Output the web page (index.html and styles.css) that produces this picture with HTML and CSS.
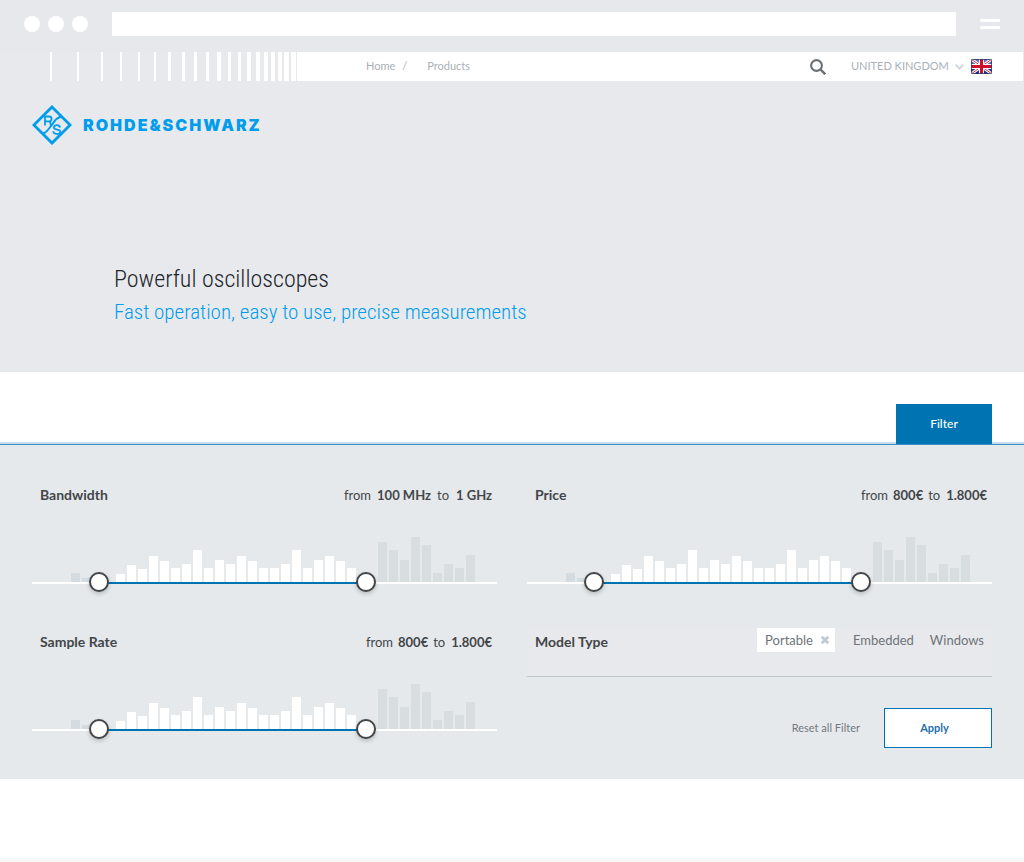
FILE: index.html
```html
<!DOCTYPE html>
<html lang="en">
<head>
<meta charset="utf-8">
<meta name="viewport" content="width=device-width, initial-scale=1">
<title>Powerful oscilloscopes</title>
<link rel="stylesheet" href="styles.css">
</head>
<body>
<div class="browser">
  <span class="dots"><i class="dot"></i><i class="dot"></i><i class="dot"></i></span>
  <input class="address" type="text" aria-label="Address">
  <button class="menu" type="button" aria-label="Menu"><i class="menu-line"></i><i class="menu-line"></i></button>
</div>

<header class="hero">
  <div class="topnav">
    <svg class="stripes" width="247" height="29" viewBox="50 0 247 29" fill="#fff" shape-rendering="crispEdges" aria-hidden="true">
      <path d="M50 0h2v29h-2zM77 0h2v29h-2zM101 0h2v29h-2zM120 0h2v29h-2zM138 0h2v29h-2zM154 0h2v29h-2zM168 0h3v29h-3zM182 0h3v29h-3zM194 0h3v29h-3zM206 0h3v29h-3zM217 0h4v29h-4zM228 0h3v29h-3zM238 0h3v29h-3zM247 0h4v29h-4zM256 0h4v29h-4zM264 0h4v29h-4zM271 0h4v29h-4zM278 0h4v29h-4zM284 0h5v29h-5zM291 0h5v29h-5z"/>
    </svg>
    <div class="topnav-main">
      <nav class="crumbs" aria-label="Breadcrumb">
        <a class="crumb" href="#">Home</a><span class="slash">/</span><a class="crumb" href="#">Products</a>
      </nav>
      <div class="tools">
        <button class="search" type="button" aria-label="Search">
          <svg width="16" height="16" viewBox="0 0 16 16" fill="none" stroke="#6b7074"><circle cx="6.5" cy="6.5" r="5.4" stroke-width="2.1"/><path d="M10.5 10.5l4.8 4.8" stroke-width="2.4"/></svg>
        </button>
        <span class="region">
          <select class="country" aria-label="Country"><option>UNITED KINGDOM</option></select>
          <svg class="chevron" width="9" height="6" viewBox="0 0 9 6" fill="none" stroke="#d3d8dc" stroke-width="2"><path d="M.7.8l3.800 3.800L8.300.8"/></svg>
        </span>
        <svg class="flag" width="21" height="15" viewBox="0 0 21 15" aria-hidden="true">
          <defs>
            <linearGradient id="navy" x2="0" y2="1"><stop offset="0" stop-color="#6d80b8"/><stop offset="1" stop-color="#0d2878"/></linearGradient>
            <clipPath id="flagEdge"><rect width="21" height="15" rx="1"/></clipPath>
          </defs>
          <g clip-path="url(#flagEdge)">
            <rect width="21" height="15" fill="url(#navy)"/>
            <path d="M0 0l21 15M21 0L0 15" stroke="#fff" stroke-width="3"/>
            <path d="M0 0l21 15M21 0L0 15" stroke="#d8304a" stroke-width="1"/>
            <path d="M10.500 0v15M0 7.500h21" stroke="#fff" stroke-width="5"/>
            <path d="M10.500 0v15M0 7.500h21" stroke="#cf102d" stroke-width="3"/>
            <rect x=".5" y=".5" width="20" height="14" rx="1" fill="none" stroke="#26356e" stroke-opacity=".75"/>
          </g>
        </svg>
      </div>
    </div>
  </div>

  <a class="brand" href="#" aria-label="Rohde &amp; Schwarz">
    <svg width="40" height="40" viewBox="0 0 40 40" fill="none" stroke="#009dec" aria-hidden="true">
      <path d="M20 1.900L38.100 20 20 38.100 1.900 20z" stroke-width="2.800"/>
      <path d="M29 11.500C23 13.500 22.500 17 19.800 20S16 26.500 11 29" stroke-width="2"/>
      <path d="M13 20.500V11.500h4.100a2.400 2.400 0 0 1 0 4.900H13M16.800 16.400c2 .3 1.700 1.700 2 4.100" stroke-width="1.800"/>
      <path d="M28 22.600c-.4-3.500-6.300-3.200-6.100 0 .3 2.700 6.300 1.400 6.400 4 .1 3.200-6.700 3.300-7-.4" stroke-width="1.800"/>
    </svg>
    <span class="wordmark">ROHDE&amp;SCHWARZ</span>
  </a>

  <div class="headline">
    <h1 class="title">Powerful oscilloscopes</h1>
    <p class="subtitle">Fast operation, easy to use, precise measurements</p>
  </div>
</header>

<main>
  <div class="tabs"><button class="tab" type="button">Filter</button></div>

  <form class="filters">
    <section class="range" data-range>
      <div class="range-head">
        <h2 class="label">Bandwidth</h2>
        <p class="values wide"><span>from</span><b>100 MHz</b><span>to</span><b class="upper">1 GHz</b></p>
      </div>
    </section>

    <section class="range" data-range>
      <div class="range-head">
        <h2 class="label">Price</h2>
        <p class="values"><span>from</span><b>800€</b><span>to</span><b class="upper">1.800€</b></p>
      </div>
    </section>

    <section class="range" data-range>
      <div class="range-head">
        <h2 class="label">Sample Rate</h2>
        <p class="values"><span>from</span><b>800€</b><span>to</span><b class="upper">1.800€</b></p>
      </div>
    </section>

    <div class="last">
      <section class="model">
        <h2 class="label">Model Type</h2>
        <div class="options">
          <button class="option selected" type="button" aria-pressed="true">Portable
            <svg width="8" height="8" viewBox="0 0 8 8" stroke="#c0c9cf" stroke-width="2.800" aria-hidden="true"><path d="M.8.8l6.400 6.400M7.200.8L.8 7.200"/></svg>
          </button>
          <button class="option" type="button" aria-pressed="false">Embedded</button>
          <button class="option" type="button" aria-pressed="false">Windows</button>
        </div>
      </section>
      <div class="actions">
        <button class="reset" type="reset">Reset all Filter</button>
        <button class="apply" type="submit">Apply</button>
      </div>
    </div>
  </form>
</main>
<footer class="footer"></footer>
<script src="filters.js"></script>
</body>
</html>
```
FILE: styles.css
```css
* { box-sizing: border-box; }

body {
  margin: 0;
  min-height: 100vh;
  display: flex;
  flex-direction: column;
  background: #fff;
  color: #434649;
  font-family: Lato, "Liberation Sans", sans-serif;
  font-size: 13px;
}

h1, h2, p { margin: 0; }
button, input, select { font: inherit; color: inherit; margin: 0; }
button { border: 0; padding: 0; background: none; cursor: pointer; }
a { color: inherit; text-decoration: none; }
svg { display: block; flex: none; }

.browser {
  display: flex;
  align-items: center;
  gap: 24px;
  height: 52px;
  padding: 0 24px 4px;
  background: #e7e8ec;
}
.dots { display: flex; gap: 8px; }
.dot { width: 16px; height: 16px; border-radius: 50%; background: #fff; }
.address { flex: 1; min-width: 0; height: 24px; border: 0; padding: 0 8px; background: #fff; }
.menu { display: flex; flex-direction: column; gap: 4px; }
.menu-line { width: 20px; height: 3px; border-radius: 1px; background: #fff; }

.hero { background: #e8e9ed; padding-bottom: 45px; }
.topnav { display: flex; padding: 0 1px 0 50px; }
.topnav-main {
  flex: 1;
  display: flex;
  justify-content: space-between;
  align-items: center;
  height: 29px;
  padding: 0 31px 0 69px;
  background: #fff;
  color: #a9b1b7;
  font-size: 11px;
}
.crumbs { display: flex; padding-bottom: 2px; }
.slash { margin: 0 20px 0 7px; }
.tools { display: flex; align-items: center; }
.search { margin-right: 25px; }
.region { display: flex; align-items: center; gap: 6px; margin-right: 7px; }
.country { appearance: none; border: 0; padding: 0 0 2px; background: none; }

.brand { display: inline-flex; align-items: center; gap: 11px; margin: 24px 32px 0; color: #009dec; }
.wordmark { font: 900 16px/20px Inter, "DejaVu Sans", sans-serif; letter-spacing: 2px; }

.headline { margin: 114px 32px 0 114px; font-family: "Roboto Condensed", Roboto, sans-serif; font-weight: 300; }
.title { font-size: 24px; line-height: 35px; font-weight: 300; color: #20262a; }
.subtitle { font-size: 21px; line-height: 30px; color: #009dec; }

.tabs { display: flex; justify-content: flex-end; padding: 32px 32px 0; border-bottom: 1px solid #3c8dc5; box-shadow: inset 0 -2px #c7dced; }
.tab { width: 96px; height: 40px; padding-bottom: 2px; background: #0074b2; color: #fff; font-size: 12px; font-weight: 500; }

.filters {
  display: grid;
  grid-template-columns: 1fr 1fr;
  gap: 35px 30px;
  padding: 35px 32px 31px;
  background: #e5e9ec;
}
.range-head { display: flex; justify-content: space-between; align-items: center; height: 30px; padding: 0 5px 0 8px; }
.label { font-size: 14px; line-height: 20px; font-weight: 700; }
.values { display: flex; gap: 5px; font-size: 13px; line-height: 20px; white-space: nowrap; }
.values b { font-weight: 700; }
.wide { gap: 6px; }
.values .upper { margin-left: 1px; }

.histogram { display: flex; align-items: flex-end; gap: 2px; height: 72px; }
.bar { background: #fff; }
.bar.below { background: #d4dce2; }
.bar.above { background: #d8dde0; }

.slider { position: relative; height: 20px; margin-top: -10px; padding-top: 10px; }
.track { height: 2px; background: #fff; }
.fill { height: 2px; background: #0074b2; }
.thumb {
  position: absolute;
  inset: 0;
  width: 100%;
  height: 20px;
  appearance: none;
  background: none;
  pointer-events: none;
}
.thumb::-webkit-slider-thumb {
  appearance: none;
  width: 20px;
  height: 20px;
  border: 2px solid #434649;
  border-radius: 50%;
  background: #fff;
  box-shadow: 0 2px 4px rgba(0, 0, 0, .2);
  pointer-events: auto;
}

.last { padding-top: 1px; }
.model {
  display: flex;
  justify-content: space-between;
  height: 49px;
  padding-left: 8px;
  border-bottom: 1px solid #bfc7ce;
  background: linear-gradient(transparent 2px, #e8e9ed 2px);
}
.model .label { padding-top: 4px; }
.options { display: flex; color: #6f7478; font-size: 13px; }
.option { display: flex; align-items: center; gap: 8px; height: 24px; padding: 0 8px; }
.selected { margin-right: 10px; padding-right: 6px; background: #fff; }

.actions { display: flex; justify-content: flex-end; align-items: center; gap: 24px; margin-top: 31px; }
.reset { padding-bottom: 2px; color: #74797d; font-size: 11px; }
.apply { width: 108px; height: 40px; padding: 0 7px 2px 0; border: 1px solid #0074b2; background: #fff; color: #1f6fb0; font-size: 11px; font-weight: 700; }

.footer { height: 4px; margin-top: auto; background: #f6f8fa; }
```
FILE: filters.js
```js
// Histogram layout: bars share one width, spacers keep room for the slider thumbs.
const below = [9, 4];
const inside = [8, 17, 13, 26, 21, 14, 18, 32, 14, 22, 18, 26, 21, 14, 14, 18, 32, 14, 22, 26, 21, 14];
const above = [40, 32, 22, 45, 37, 9, 18, 14, 27];

const spacer = (weight) => `<i style="flex:${weight} 1 0"></i>`;
const bars = (heights, kind) =>
  heights.map((h) => `<i class="bar ${kind}" style="flex:9 1 0;height:${h}px"></i>`).join("");

document.querySelectorAll("[data-range]").forEach((section) => {
  const name = section.querySelector(".label").textContent;
  section.insertAdjacentHTML("beforeend", `
    <div class="histogram" aria-hidden="true">
      ${spacer(37)}${bars(below, "below")}${spacer(21)}${bars(inside, "")}${spacer(18)}${bars(above, "above")}${spacer(20)}
    </div>
    <div class="slider">
      <div class="track"><div class="fill" style="margin:0 28.2% 0 14.4%"></div></div>
      <input class="thumb" type="range" min="0" max="1000" value="128" aria-label="${name} from">
      <input class="thumb" type="range" min="0" max="1000" value="728" aria-label="${name} to">
    </div>`);
});
```
